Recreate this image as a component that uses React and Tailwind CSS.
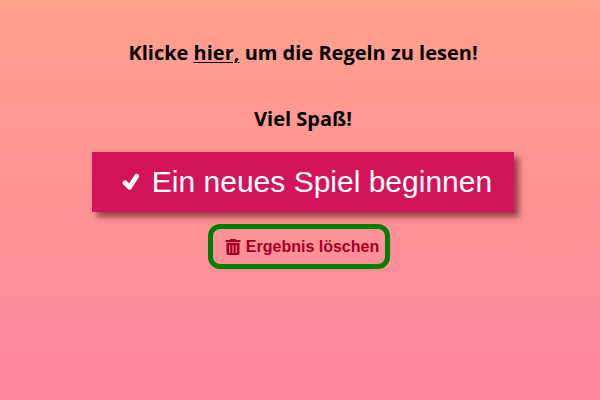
function CheckIcon() {
  return (
    <svg viewBox="0 0 18 18" className="h-[18px] w-[18px] shrink-0" fill="none" stroke="currentColor" strokeWidth="4.8" strokeLinecap="round" strokeLinejoin="round" aria-hidden="true">
      <path d="M3 9.700 L7.600 14.200 L14.600 3.200" />
    </svg>
  );
}

function TrashIcon() {
  return (
    <svg viewBox="0 0 16 18" className="h-[18px] w-4 shrink-0" fill="currentColor" aria-hidden="true">
      <path d="M5.500 1h5l.8 1H15.500v2H.5V2h4.200z" />
      <path fillRule="evenodd" d="M1.500 4.800h13v10.700a1.500 1.500 0 0 1-1.500 1.500H3a1.500 1.500 0 0 1-1.500-1.500zM4.200 7v8h1V7zM7.500 7v8h1V7zM10.800 7v8h1V7z" />
    </svg>
  );
}

export default function App() {
  return (
    <main className="flex min-h-screen flex-col items-center bg-linear-to-b from-[#ffa18d] to-[#ff849d] pt-[41px] pl-1.5 font-['Open_Sans',sans-serif] text-black">
      <p className="text-xl leading-6 font-bold">
        Klicke <a href="#regeln" className="underline decoration-1 underline-offset-2">hier,</a> um die Regeln zu lesen!
      </p>
      <p className="mt-[42px] text-xl leading-6 font-bold">Viel Spaß!</p>
      <button
        type="button"
        className="mt-[21px] flex h-[60px] items-center gap-3 bg-[#d3145a] pr-[22px] pl-[30px] font-['Liberation_Sans',Arial,sans-serif] text-3xl text-white shadow-[5px_5px_6px_rgba(60,0,0,0.55)]"
      >
        <CheckIcon />
        Ein neues Spiel beginnen
      </button>
      <div className="mt-3 mr-2 rounded-xl border-[5px] border-[#008000]">
        <button
          type="button"
          className="flex h-[35px] items-center gap-[5px] pr-1.5 pl-3 font-['Liberation_Sans',Arial,sans-serif] text-base font-bold text-[#a00028]"
        >
          <TrashIcon />
          Ergebnis löschen
        </button>
      </div>
    </main>
  );
}
